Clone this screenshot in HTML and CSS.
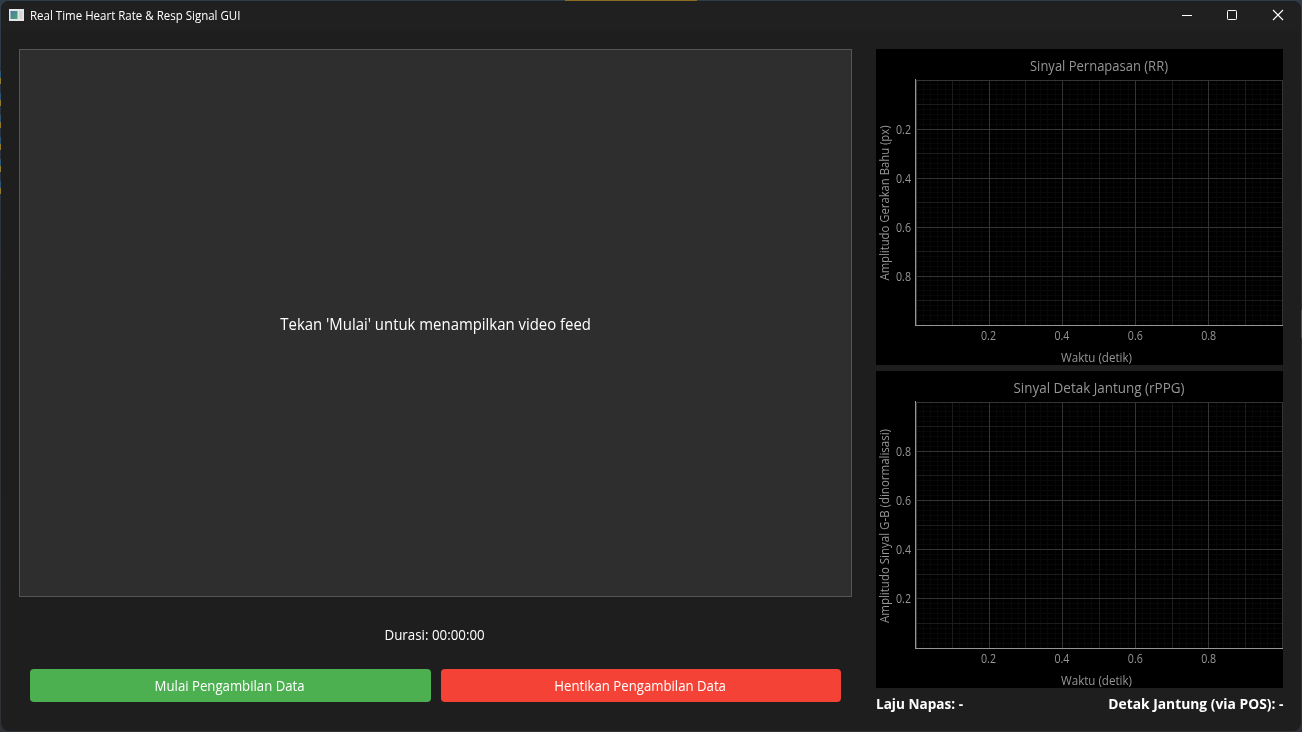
FILE: index.html
```html
<!DOCTYPE html>
<html lang="id">
<head>
<meta charset="utf-8">
<title>Real Time Heart Rate &amp; Resp Signal GUI</title>
<link rel="stylesheet" href="styles.css">
</head>
<body>
<div class="desktop">
<div class="window">
  <header class="titlebar">
    <svg class="app-icon" width="15" height="12" viewBox="0 0 15 12">
      <defs><linearGradient id="scr" x1="0" y1="0" x2="1" y2="1"><stop offset="0" stop-color="#4a78a8"/><stop offset="1" stop-color="#4fa573"/></linearGradient></defs>
      <rect width="15" height="12" fill="#e4e6e8"/>
      <rect x="1.5" y="2" width="7" height="8" fill="url(#scr)"/>
      <rect x="10" y="2" width="3.5" height="8" fill="#d2d6d8"/>
    </svg>
    <h1 class="title">Real Time Heart Rate &amp; Resp Signal GUI</h1>
    <div class="controls">
      <svg width="46" height="30" viewBox="0 0 46 30"><path d="M18 14.5h10" stroke="#fff"/></svg>
      <svg width="45" height="30" viewBox="0 0 45 30"><rect x="17.5" y="9.5" width="9" height="9" rx=".8" fill="none" stroke="#fff"/></svg>
      <svg width="46" height="30" viewBox="0 0 46 30"><path d="M18 9l10 10M28 9l-10 10" stroke="#fff" stroke-width="1.1"/></svg>
    </div>
  </header>
  <main class="content">
    <section class="left">
      <div class="video"><span class="video-text">Tekan 'Mulai' untuk menampilkan video feed</span></div>
      <div class="duration"><span>Durasi: 00:00:00</span></div>
      <div class="buttons">
        <button class="btn start"><span>Mulai Pengambilan Data</span></button>
        <button class="btn stop"><span>Hentikan Pengambilan Data</span></button>
      </div>
    </section>
    <section class="right">
      <svg class="chart" id="rr" width="407" height="316"></svg>
      <svg class="chart" id="ppg" width="407" height="317"></svg>
      <div class="stats"><span class="stat-rr">Laju Napas: -</span><span class="stat-hr">Detak Jantung (via POS): -</span></div>
    </section>
  </main>
</div>
</div>
<script src="chart.js"></script>
</body>
</html>
```
FILE: styles.css
```css
* { box-sizing: border-box; }
body { margin: 0; font-family: "Open Sans", "Noto Sans", sans-serif; color: #fff; }
.desktop {
  width: 1302px; height: 732px; padding: 1px; overflow: hidden;
  background:
    linear-gradient(#8a6d22, #8a6d22) 565px 0 / 132px 1px no-repeat,
    repeating-linear-gradient(#2b3440 0 5px, #2c5474 5px 12px, #927a2c 12px 18px, #2b3440 18px 22px) 0 66px / 1px 132px no-repeat,
    linear-gradient(#1f5c92, #1f5c92) 1301px 310px / 1px 28px no-repeat,
    linear-gradient(#2f3d49, #2d3237 40%, #2f3338);
}
.window { width: 1300px; height: 730px; border-radius: 8px; background: #1e1e1e; overflow: hidden; display: flex; flex-direction: column; }
.titlebar { height: 30px; flex: none; background: #202020; display: flex; align-items: center; }
.app-icon { margin: 0 0 2px 8px; }
.title { margin: 0 0 0 6px; font-size: 12px; font-weight: 400; line-height: 16px; white-space: nowrap; transform: scaleX(.958); transform-origin: left; }
.controls { margin-left: auto; display: flex; }
.content { flex: 1; padding: 18px 18px 0; display: flex; gap: 24px; }
.left { width: 833px; }
.video { height: 548px; padding-top: 2px; background: #2e2e2e; border: 1px solid #555; display: flex; align-items: center; justify-content: center; font-size: 16px; }
.video-text { transform: scaleX(.932); }
.duration { height: 72px; padding: 3px 1px 0 0; display: flex; align-items: center; justify-content: center; font-size: 14px; }
.duration span { transform: scaleX(.952); }
.buttons { display: flex; gap: 10px; padding: 0 11px; }
.btn { flex: 1; height: 33px; padding: 0 1px 0 0; border: 0; border-radius: 4px; color: #fff; font: 14px "Open Sans", "Noto Sans", sans-serif; white-space: nowrap; }
.btn span { display: inline-block; transform: scaleX(.942); }
.start { background: #4caf50; }
.stop { background: #f44336; }
.right { width: 407px; display: flex; flex-direction: column; gap: 6px; }
.chart { display: block; background: #000; flex: none; }
.stats { display: flex; justify-content: space-between; font-size: 14px; line-height: 20px; font-weight: 700; white-space: nowrap; }
.stat-rr { transform: scaleX(.97); transform-origin: left; }
.stat-hr { transform: scaleX(.987); transform-origin: right; }
.chart text { fill: #969696; text-anchor: middle; font-size: 12px; }
.chart .chart-title { font-size: 14px; }
.chart .axis-label { font-size: 12px; }
.chart .axis { fill: #969696; }
```
FILE: chart.js
```js
const NS = 'http://www.w3.org/2000/svg';

function add(svg, tag, attrs, text) {
  const el = document.createElementNS(NS, tag);
  for (const k in attrs) el.setAttribute(k, attrs[k]);
  if (text) {
    el.textContent = text;
    el.setAttribute('lengthAdjust', 'spacingAndGlyphs');
  }
  svg.appendChild(el);
}

function drawChart(id, o) {
  const svg = document.getElementById(id);
  const left = 40, top = 31, w = 366, h = o.h;
  for (let i = 0; i <= 50; i++) {
    const level = i % 10 === 0 ? '#343434' : i % 5 === 0 ? '#1c1c1c' : '#080808';
    const x = left + Math.floor(w * i / 50);
    const y = top + Math.floor(h * (o.inverted ? i : 50 - i) / 50);
    add(svg, 'rect', { x, y: top, width: 1, height: h, fill: level, style: 'mix-blend-mode:lighten' });
    add(svg, 'rect', { x: left, y, width: 367, height: 1, fill: level, style: 'mix-blend-mode:lighten' });
  }
  add(svg, 'rect', { class: 'axis', x: 39, y: top - 1, width: 1, height: h + 2 });
  add(svg, 'rect', { class: 'axis', x: 39, y: top + h, width: 368, height: 1 });
  add(svg, 'text', { class: 'chart-title', x: 223, y: 22, textLength: o.titleWidth }, o.title);
  add(svg, 'text', { class: 'axis-label', x: 220.5, y: h + 68, textLength: 71 }, 'Waktu (detik)');
  add(svg, 'text', { class: 'axis-label', transform: `translate(13 ${o.labelY}) rotate(-90)`, textLength: o.labelWidth }, o.label);
  ['0.2', '0.4', '0.6', '0.8'].forEach((t, i) => {
    const f = (i + 1) / 5;
    add(svg, 'text', { x: left + 72.5 + i * 73.4, y: h + 46, textLength: 15 }, t);
    add(svg, 'text', { x: 27.5, y: Math.floor(top + 5 + h * (o.inverted ? f : 1 - f)), textLength: 15 }, t);
  });
}

drawChart('rr', { h: 245, inverted: true, title: 'Sinyal Pernapasan (RR)', titleWidth: 138, label: 'Amplitudo Gerakan Bahu (px)', labelWidth: 155, labelY: 154 });
drawChart('ppg', { h: 246, inverted: false, title: 'Sinyal Detak Jantung (rPPG)', titleWidth: 171, label: 'Amplitudo Sinyal G-B (dinormalisasi)', labelWidth: 194, labelY: 155 });
```
